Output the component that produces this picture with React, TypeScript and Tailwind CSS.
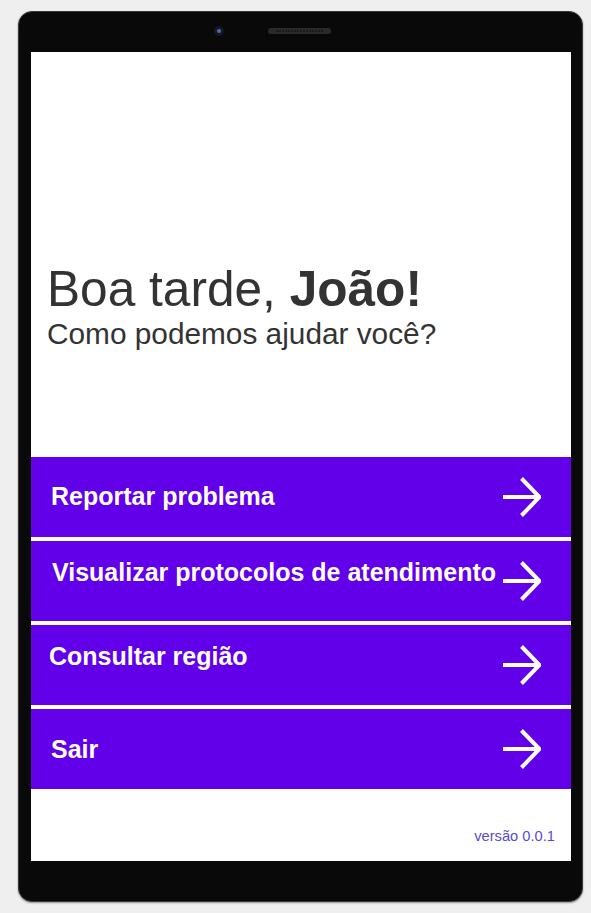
const items = [
  { label: "Reportar problema", text: "pl-[20px]" },
  { label: "Visualizar protocolos de atendimento", text: "pl-[21px] mb-[16px]" },
  { label: "Consultar região", text: "pl-[18px] mb-[16px]" },
  { label: "Sair", text: "pl-[20px] mt-[2px]" },
];

function Arrow() {
  return (
    <svg width="40" height="40" viewBox="0 0 40 40" fill="none" className="shrink-0">
      <path d="M2 20 H37.5 M20.5 1.5 L38.5 20 L20.5 38.5" stroke="white" strokeWidth="4" />
    </svg>
  );
}

export default function App() {
  return (
    <div className="min-h-[913px] w-[591px] bg-[#efefef] pt-[11px] pl-[18px]" style={{ fontFamily: '"Liberation Sans", Arial, sans-serif' }}>
      <div className="flex h-[891px] w-[565px] flex-col rounded-[14px] border border-[#3a3a3a] bg-[#090909] shadow-[0_1px_2px_rgba(0,0,0,0.4)]">
        {/* top bezel: camera + speaker */}
        <div className="flex h-[40px] items-center pl-[195px] pb-[2px]">
          <div className="flex h-[10px] w-[10px] items-center justify-center rounded-full bg-[#151820]">
            <div className="h-[4px] w-[4px] rounded-full bg-[#4a6fb0]" />
          </div>
          <div className="ml-[44px] flex h-[6px] w-[63px] items-center justify-center gap-[1px] rounded-full bg-[#2a2a2c]">
            {Array.from({ length: 16 }).map((_, i) => (
              <div key={i} className="h-[2px] w-[2px] bg-[#1a1a1a]" />
            ))}
          </div>
        </div>

        {/* screen */}
        <div className="mx-[12px] flex h-[809px] w-[540px] flex-col bg-white">
          <div className="h-[405px] pt-[209px] pl-[16px] text-[#333]">
            <div className="text-[49.6px] leading-[56px]">
              Boa tarde, <span className="font-bold">João!</span>
            </div>
            <div className="text-[29.8px] leading-[34px]">Como podemos ajudar você?</div>
          </div>

          <div className="flex flex-col gap-[4px]">
            {items.map((it) => (
              <div key={it.label} className="flex h-[80px] items-center justify-between bg-[#6200ea] pr-[30px]">
                <span className={`text-[25px] font-bold text-white ${it.text}`}>{it.label}</span>
                <Arrow />
              </div>
            ))}
          </div>

          <div className="flex flex-1 justify-end pt-[37px] pr-[16px]">
            <span className="text-[14.7px] leading-[20px] text-[#5a4bd2]">versão 0.0.1</span>
          </div>
        </div>
      </div>
    </div>
  );
}
